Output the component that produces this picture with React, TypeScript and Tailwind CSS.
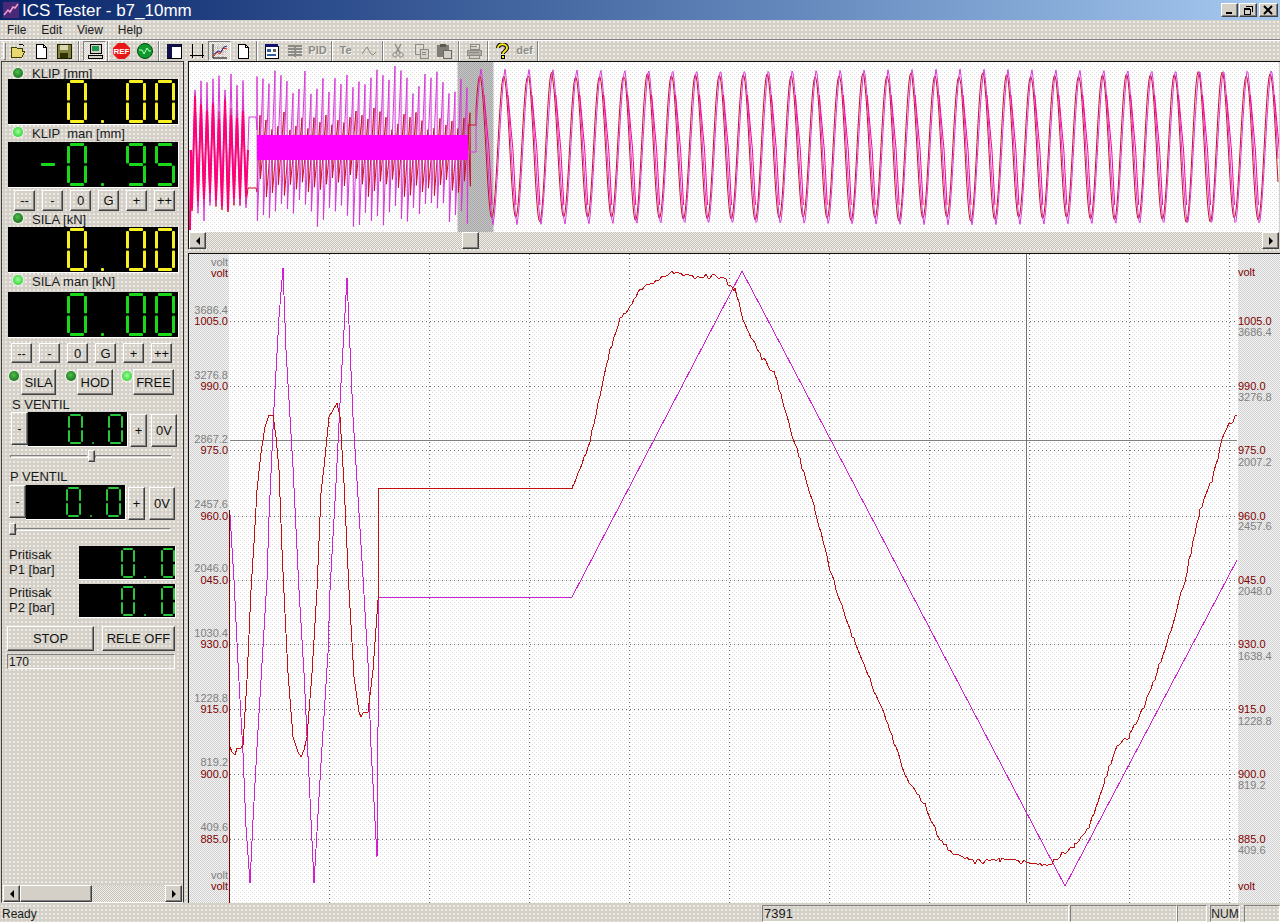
import React from 'react';

// Win9x style bevels, shared by every button
const raised =
  'flex items-center justify-center border border-t-white border-l-white border-r-[#404040] border-b-[#404040] shadow-[inset_-1px_-1px_0_#808080] text-[#101010] leading-none';
const sunken = 'border border-t-[#808080] border-l-[#808080] border-r-white border-b-white';

/* ---------- seven segment readouts ---------- */

const SEGMENTS: Record<string, string> = {
  '0': 'abcdef',
  '5': 'acdfg',
  '9': 'abcdfg',
  '-': 'g',
};

function Digit({ ch, w, h, t, fill }: { ch: string; w: number; h: number; t: number; fill: string }) {
  const on = SEGMENTS[ch] || '';
  const mid = h / 2;
  const rects: Record<string, [number, number, number, number]> = {
    a: [t, 0, w - 2 * t, t],
    b: [w - t, t, t, mid - t - 1],
    c: [w - t, mid + 1, t, mid - t - 1],
    d: [t, h - t, w - 2 * t, t],
    e: [0, mid + 1, t, mid - t - 1],
    f: [0, t, t, mid - t - 1],
    g: [t, mid - t / 2, w - 2 * t, t],
  };
  return (
    <svg width={w} height={h} className="block shrink-0">
      {on.split('').map((s) => {
        const [x, y, rw, rh] = rects[s];
        return <rect key={s} x={x} y={y} width={rw} height={rh} rx={1} className={fill} />;
      })}
    </svg>
  );
}

interface ReadoutProps {
  value: string;
  fill: string;
  w: number;
  h: number;
  t: number;
  gap: string;
  dotW: number;
  className: string;
}

function Readout({ value, fill, w, h, t, gap, dotW, className }: ReadoutProps) {
  return (
    <div aria-label={value} className={`relative flex items-center justify-end bg-black border-r border-b border-white ${gap} ${className}`}>
      {value.split('').map((ch, i) =>
        ch === '.' ? (
          <svg key={i} width={dotW} height={h} className="block shrink-0">
            <rect x={Math.round(dotW / 4)} y={h - t} width={t} height={t} rx={1} className={fill} />
          </svg>
        ) : (
          <Digit key={i} ch={ch} w={w} h={h} t={t} fill={fill} />
        )
      )}
    </div>
  );
}

function BigReadout({ value, color }: { value: string; color: 'yellow' | 'green' }) {
  return (
    <Readout
      value={value}
      fill={color === 'yellow' ? 'fill-[#f8f020]' : 'fill-[#1ad81a]'}
      w={20}
      h={43}
      t={3}
      gap="gap-[9px]"
      dotW={21}
      className="ml-[6px] w-[171px] h-[46px] pr-[3px]"
    />
  );
}

function Led({ on, className = '' }: { on?: boolean; className?: string }) {
  return (
    <span
      className={`block w-[10px] h-[10px] rounded-full shrink-0 shadow-[0_0_2px_1px_#f4f4f0] ${
        on
          ? 'bg-[radial-gradient(circle_at_50%_45%,#9dff9d,#12c812)]'
          : 'bg-[radial-gradient(circle_at_45%_40%,#4fc04f,#0a5a0a)]'
      } ${className}`}
    />
  );
}

function LedLabel({ text, on, h, lead }: { text: string; on?: boolean; h: string; lead: string }) {
  return (
    <div className={`flex ml-[11px] whitespace-pre text-[13px] text-[#1a1a1a] ${h} ${lead}`}>
      <Led on={on} className="mt-[2px]" />
      <span className="ml-[9px]">{text}</span>
    </div>
  );
}

function StepRow({ className }: { className: string }) {
  return (
    <div className={`flex gap-[7px] ${className}`}>
      {['--', '-', '0', 'G', '+', '++'].map((b) => (
        <button key={b} className={`${raised} w-[21px] h-full text-[13px]`}>
          {b}
        </button>
      ))}
    </div>
  );
}

function Arrow({ dir }: { dir: 'left' | 'right' }) {
  return (
    <svg width="6" height="8" viewBox="0 0 6 8" className="block">
      <polygon points={dir === 'left' ? '5,0 5,8 1,4' : '1,0 1,8 5,4'} className="fill-black" />
    </svg>
  );
}

function Slider({ left, right, className }: { left: string; right: string; className: string }) {
  return (
    <div className={`flex items-center h-[12px] ${className}`}>
      <span className={`h-[3px] ${sunken} ${left}`} />
      <span className={`${raised} w-[7px] h-[12px] shrink-0`} />
      <span className={`h-[3px] ${sunken} ${right}`} />
    </div>
  );
}

function ValveRow({ className }: { className: string }) {
  return (
    <div className={`flex items-start ${className}`}>
      <button className={`${raised} w-[17px] h-[33px] text-[13px]`}>-</button>
      <Readout
        value="0.0"
        fill="fill-[#26c83a]"
        w={15}
        h={30}
        t={2}
        gap="gap-[6px]"
        dotW={13}
        className="w-[100px] h-[35px] pr-[4px]"
      />
      <button className={`${raised} w-[17px] h-[33px] ml-[2px] mt-[2px] text-[13px]`}>+</button>
      <button className={`${raised} w-[26px] h-[33px] ml-[4px] mt-[2px] text-[13px]`}>0V</button>
    </div>
  );
}

function Pressure({ name, className }: { name: string; className: string }) {
  return (
    <div className={`flex h-[34px] ${className}`}>
      <div className="w-[70px] ml-[7px] mt-[1px] text-[13px] leading-[15px] text-[#1a1a1a]">
        Pritisak
        <br />
        {name} [bar]
      </div>
      <Readout
        value="0.0"
        fill="fill-[#26c83a]"
        w={14}
        h={30}
        t={2}
        gap="gap-[5px]"
        dotW={16}
        className="w-[97px] h-[34px]"
      />
    </div>
  );
}

function LeftPanel() {
  return (
    <div className="w-[183px] h-[842px] ml-[1px] shrink-0 flex flex-col border border-[#404040] border-r-[#303030] border-b-white">
      <div className="mt-[4px]">
        <LedLabel text="KLIP [mm]" h="h-[13px]" lead="leading-[16px]" />
      </div>
      <BigReadout value="0.00" color="yellow" />
      <LedLabel text="KLIP  man [mm]" on h="h-[17px]" lead="leading-[17px]" />
      <BigReadout value="-0.95" color="green" />
      <StepRow className="ml-[12px] mt-[2px] h-[21px]" />
      <LedLabel text="SILA [kN]" h="h-[16px]" lead="leading-[18px]" />
      <BigReadout value="0.00" color="yellow" />
      <LedLabel text="SILA man [kN]" on h="h-[19px]" lead="leading-[18px]" />
      <BigReadout value="0.00" color="green" />
      <StepRow className="ml-[9px] mt-[5px] h-[20px]" />

      <div className="flex ml-[7px] mt-[6px] h-[26px] text-[13px]">
        <Led className="mt-[2px]" />
        <button className={`${raised} ml-[2px] w-[35px]`}>SILA</button>
        <Led className="ml-[10px] mt-[2px]" />
        <button className={`${raised} ml-[1px] w-[36px]`}>HOD</button>
        <Led className="ml-[9px] mt-[2px]" on />
        <button className={`${raised} ml-[1px] w-[41px]`}>FREE</button>
      </div>

      <div className="ml-[10px] h-[17px] text-[13px] leading-[20px] text-[#1a1a1a]">S VENTIL</div>
      <ValveRow className="ml-[9px] h-[35px]" />
      <Slider className="ml-[8px] mt-[3px]" left="w-[78px]" right="w-[77px]" />

      <div className="ml-[8px] h-[23px] text-[13px] leading-[30px] text-[#1a1a1a]">P VENTIL</div>
      <ValveRow className="ml-[7px] h-[34px]" />
      <Slider className="ml-[7px] mt-[4px]" left="w-0 border-0" right="w-[155px]" />

      <Pressure name="P1" className="mt-[11px]" />
      <Pressure name="P2" className="mt-[4px]" />

      <div className="flex gap-[8px] ml-[5px] mt-[8px] h-[25px] text-[13px]">
        <button className={`${raised} w-[87px]`}>STOP</button>
        <button className={`${raised} w-[73px]`}>RELE OFF</button>
      </div>
      <div className={`ml-[5px] mt-[3px] w-[168px] h-[15px] text-[12px] leading-[14px] pl-[1px] text-[#1a1a1a] ${sunken}`}>170</div>

      <div className="flex-1" />
      <Scrollbar className="h-[17px] ml-[1px] w-[179px]" thumb="w-[72px]" before="" />
    </div>
  );
}

function Scrollbar({ className, thumb, before }: { className: string; thumb: string; before: string }) {
  return (
    <div className={`flex bg-[repeating-conic-gradient(#f2f0ea_0_25%,#c4c0b8_0_50%)] bg-[length:2px_2px] ${className}`}>
      <button className={`${raised} w-[17px] h-full bg-[#d4d0c8] shrink-0`}>
        <Arrow dir="left" />
      </button>
      <span className={before} />
      <span className={`${raised} h-full bg-[#d4d0c8] shrink-0 ${thumb}`} />
      <span className="flex-1" />
      <button className={`${raised} w-[17px] h-full bg-[#d4d0c8] shrink-0`}>
        <Arrow dir="right" />
      </button>
    </div>
  );
}

/* ---------- chart data ---------- */

const noise = (i: number) => {
  const v = Math.sin(i * 12.9898) * 43758.5453;
  return v - Math.floor(v);
};

const toPts = (p: number[][]) => p.map(([x, y]) => `${x},${y}`).join(' ');

const RED_HEAD = [
  [230, 747], [232, 752], [235, 755], [237, 748], [241, 748], [243, 745], [247, 680], [251, 590], [254, 543], [257, 490],
  [261, 453], [265, 427], [269, 415], [273, 415], [276, 437], [279, 470], [282, 550], [284, 593], [288, 673],
  [293, 737], [298, 752], [301, 757], [304, 750], [307, 737], [312, 673], [317, 590], [321, 493], [324, 467],
  [329, 417], [333, 410], [337, 403], [340, 417], [344, 483], [349, 590], [354, 677], [359, 712], [361, 717],
  [363, 713], [368, 712], [373, 670], [378, 600], [378, 488], [572, 488],
];

const RED_TAIL = [
  [572, 488], [580, 470], [590, 440], [600, 395], [610, 350], [620, 320], [630, 305], [640, 290], [650, 283],
  [660, 278], [675, 272], [690, 276], [720, 276], [735, 290], [745, 325], [760, 355], [775, 375], [785, 410],
  [800, 460], [815, 510], [830, 570], [850, 630], [870, 680], [890, 730], [905, 775], [925, 805], [940, 840],
  [955, 855], [975, 862], [1000, 860], [1030, 862], [1050, 865], [1060, 855], [1075, 845], [1090, 825],
  [1105, 780], [1115, 750], [1130, 735], [1145, 705], [1165, 650], [1185, 580], [1200, 510], [1212, 480],
  [1225, 430], [1237, 415],
];

// the real signal is noisy, so resample the tail every 2px with some jitter
function roughen(src: number[][]) {
  const out: number[][] = [];
  for (let s = 0; s < src.length - 1; s++) {
    const [x0, y0] = src[s];
    const [x1, y1] = src[s + 1];
    for (let x = x0; x < x1; x += 2) {
      const y = y0 + ((y1 - y0) * (x - x0)) / (x1 - x0);
      out.push([x, Math.round(y + (noise(x) - 0.5) * 5)]);
    }
  }
  out.push(src[src.length - 1]);
  return out;
}

const redMain = toPts([...RED_HEAD, ...roughen(RED_TAIL)]);

const magentaMain = toPts([
  [230, 515], [234, 580], [238, 663], [243, 753], [246, 827], [250, 883], [253, 820], [257, 747], [263, 647],
  [267, 580], [269, 517], [274, 407], [279, 317], [283, 268], [286, 350], [293, 467], [299, 590], [304, 673],
  [309, 777], [314, 883], [321, 763], [328, 653], [330, 590], [336, 483], [341, 383], [347, 278], [353, 417],
  [363, 577], [368, 663], [371, 747], [377, 857], [378, 727], [378, 597], [572, 597], [742, 271], [1065, 886],
  [1237, 560],
]);

// overview strip: burst, dense middle, then the slow sine
function stripTraces() {
  const red: number[][] = [[190, 230], [191, 150]];
  const mag: number[][] = [[190, 150]];
  const pink: number[][] = [[190, 230], [191, 150]];
  let i = 0;
  for (let x = 192; x < 248; x += 3) {
    i++;
    const up = i % 2 === 0;
    pink.push([x, up ? 95 + noise(i) * 25 : 190 + noise(i) * 20]);
    mag.push([x, up ? 72 + noise(i + 50) * 22 : 200 + noise(i + 50) * 24]);
    red.push([x, up ? 92 + noise(i) * 20 : 200 + noise(i) * 12]);
  }
  red.push([248, 188], [256, 188], [257, 192]);
  mag.push([249, 117], [256, 117], [257, 130]);
  pink.push([248, 150]);
  i = 0;
  for (let x = 257; x < 468; x += 6) {
    i++;
    red.push([x + 3, 108 + noise(i + 7) * 22], [x + 3.4, 175 + noise(i + 11) * 22]);
    mag.push([x, 66 + noise(i + 3) * 28], [x + 0.4, 200 + noise(i + 19) * 27]);
  }
  red.push([468, 125], [476, 125]);
  mag.push([468, 152], [476, 152]);
  for (let x = 476; x <= 1278; x += 1) {
    const ph = ((x - 481) * Math.PI * 2) / 23.95;
    const wave = Math.cos(ph);
    const tri = (Math.acos(Math.cos(ph)) / Math.PI) * 2 - 1;
    const blend = wave * 0.6 - tri * 0.4;
    mag.push([x, 147 - blend * 78]);
    const rp = ((x - 479.8) * Math.PI * 2) / 23.95;
    red.push([x, 147 - Math.cos(rp) * (70 + noise(Math.floor((x - 481) / 24) + 60) * 6)]);
  }
  return { red: toPts(red), mag: toPts(mag), pink: toPts(pink) };
}

const strip = stripTraces();

// slow part where both traces lie on each other goes hot pink
const slowPink = (() => {
  const out: string[] = [];
  for (let x0 = 481; x0 < 1278; x0 += 23.95) {
    out.push(`${x0 + 3},95 ${x0 + 8},150 ${x0 + 11},205`);
  }
  return out;
})();

const LEFT_LABELS: [string, string, number, number][] = [
  ['volt', 'volt', 262, 273],
  ['3686.4', '1005.0', 310, 321],
  ['3276.8', '990.0', 375, 386],
  ['2867.2', '975.0', 439, 450],
  ['2457.6', '960.0', 504, 516],
  ['2046.0', '045.0', 568, 580],
  ['1030.4', '930.0', 633, 644],
  ['1228.8', '915.0', 698, 709],
  ['819.2', '900.0', 762, 774],
  ['409.6', '885.0', 827, 839],
  ['volt', 'volt', 875, 886],
];

const RIGHT_LABELS: [string, string, number, number][] = [
  ['1005.0', '3686.4', 321, 332],
  ['990.0', '3276.8', 386, 397],
  ['975.0', '2007.2', 450, 462],
  ['960.0', '2457.6', 516, 526],
  ['045.0', '2048.0', 580, 591],
  ['930.0', '1638.4', 644, 656],
  ['915.0', '1228.8', 709, 721],
  ['900.0', '819.2', 774, 785],
  ['885.0', '409.6', 839, 850],
];

const GRID_Y = [321, 386, 450, 516, 580, 644, 709, 774, 839];
const GRID_X = [329, 429, 529, 629, 729, 829, 929, 1029, 1129, 1229];

function Patterns() {
  return (
    <defs>
      <pattern id="plotDots" width="4" height="4" patternUnits="userSpaceOnUse">
        <rect width="4" height="4" fill="#ffffff" />
        <rect width="1" height="1" fill="#dcdcdc" />
        <rect x="2" y="2" width="1" height="1" fill="#dcdcdc" />
      </pattern>
      <pattern id="marginDots" width="2" height="2" patternUnits="userSpaceOnUse">
        <rect width="2" height="2" fill="#f4f4f4" />
        <rect width="1" height="1" fill="#d0d0d0" />
        <rect x="1" y="1" width="1" height="1" fill="#d0d0d0" />
      </pattern>
      <pattern id="selDots" width="2" height="2" patternUnits="userSpaceOnUse">
        <rect width="2" height="2" fill="#c4c4c4" />
        <rect width="1" height="1" fill="#a8a8a8" />
        <rect x="1" y="1" width="1" height="1" fill="#a8a8a8" />
      </pattern>
    </defs>
  );
}

function StripChart() {
  return (
    <svg width={1090} height={170} viewBox="189 62 1090 170" className="block">
      <Patterns />
      <rect x="189" y="62" width="1090" height="170" fill="url(#plotDots)" />
      <rect x="457.5" y="62" width="36" height="170" fill="url(#selDots)" />
      <polyline points={strip.red} fill="none" className="stroke-[#c81020]" strokeWidth={1} />
      <polyline points={strip.mag} fill="none" className="stroke-[#d838d8]" strokeWidth={1} />
      <rect x="257" y="135" width="211" height="25" className="fill-[#ff00ff]" />
      <polyline points={strip.pink} fill="none" className="stroke-[#ff0078]" strokeWidth={2} />
      {slowPink.map((p, i) => (
        <polyline key={i} points={p} fill="none" className="stroke-[#ff0090]" strokeWidth={1} />
      ))}
    </svg>
  );
}

function MainChart() {
  return (
    <svg width={1091} height={649} viewBox="189 254 1091 649" className="block">
      <Patterns />
      <rect x="189" y="254" width="1091" height="649" fill="url(#plotDots)" />
      <rect x="189" y="254" width="40" height="649" fill="url(#marginDots)" />
      <rect x="1238" y="254" width="42" height="649" fill="url(#marginDots)" />
      {GRID_Y.map((y) => (
        <line key={y} x1="230" x2="1237" y1={y + 0.5} y2={y + 0.5} className="stroke-[#707070]" strokeDasharray="1 3" />
      ))}
      {GRID_X.map((x) => (
        <line key={x} x1={x + 0.5} x2={x + 0.5} y1="254" y2="903" className="stroke-[#707070]" strokeDasharray="1 3" />
      ))}
      <line x1="230" x2="1237" y1="440.5" y2="440.5" className="stroke-[#808080]" />
      <line x1="1026.5" x2="1026.5" y1="254" y2="903" className="stroke-[#707070]" />
      <line x1="229.5" x2="229.5" y1="510" y2="903" className="stroke-[#800000]" />
      <polyline points={magentaMain} fill="none" className="stroke-[#d020d0]" strokeWidth={1} shapeRendering="crispEdges" />
      <polyline points={redMain} fill="none" className="stroke-[#c01010]" strokeWidth={1} shapeRendering="crispEdges" />
      {LEFT_LABELS.map(([g, r, gy, ry]) => (
        <g key={ry} textAnchor="end" className="text-[11px]">
          <text x="228" y={gy + 4} className="fill-[#808080]">{g}</text>
          <text x="228" y={ry + 4} className="fill-[#800000]">{r}</text>
        </g>
      ))}
      {RIGHT_LABELS.map(([r, g, ry, gy]) => (
        <g key={ry} className="text-[11px]">
          <text x="1238" y={ry + 4} className="fill-[#800000]">{r}</text>
          <text x="1238" y={gy + 4} className="fill-[#808080]">{g}</text>
        </g>
      ))}
      <text x="1238" y="276" className="text-[11px] fill-[#800000]">volt</text>
      <text x="1238" y="890" className="text-[11px] fill-[#800000]">volt</text>
    </svg>
  );
}

/* ---------- toolbar ---------- */

function Ico({ children }: { children: React.ReactNode }) {
  return (
    <svg width="16" height="16" viewBox="0 0 16 16" className="block" shapeRendering="crispEdges">
      {children}
    </svg>
  );
}

const GREY = '#8c8c86';

const icons = {
  open: (
    <Ico>
      <path d="M1 4h5l1 1h5v3h3l-3 6H1z" fill="#e8d870" stroke="#404000" />
      <path d="M9 1h3l2 2" fill="none" stroke="#000" />
    </Ico>
  ),
  doc: (
    <Ico>
      <path d="M3 1h7l3 3v11H3z" fill="#fff" stroke="#000" />
      <path d="M10 1v3h3" fill="none" stroke="#000" />
    </Ico>
  ),
  save: (
    <Ico>
      <rect x="1" y="1" width="14" height="14" fill="#808040" stroke="#202000" />
      <rect x="4" y="2" width="8" height="5" fill="#d8d8b0" />
      <rect x="4" y="10" width="8" height="5" fill="#303000" />
    </Ico>
  ),
  computer: (
    <Ico>
      <rect x="3" y="1" width="11" height="9" fill="#d4d0c8" stroke="#000" />
      <rect x="5" y="3" width="7" height="5" fill="#209850" />
      <rect x="1" y="12" width="14" height="3" fill="#d4d0c8" stroke="#000" />
    </Ico>
  ),
  ref: (
    <svg width="17" height="16" viewBox="0 0 17 16" className="block">
      <polygon points="5,0 12,0 17,5 17,11 12,16 5,16 0,11 0,5" fill="#e81818" />
      <text x="8.5" y="11" textAnchor="middle" className="text-[8px] font-bold fill-white">REF</text>
    </svg>
  ),
  run: (
    <svg width="16" height="16" viewBox="0 0 16 16" className="block">
      <circle cx="8" cy="8" r="7.5" fill="#0e9a2c" stroke="#064a14" />
      <path d="M2 7h3l2 4 3-6 2 3h2" fill="none" stroke="#c8ffc8" />
    </svg>
  ),
  panes: (
    <Ico>
      <rect x="1" y="1" width="14" height="14" fill="#fff" stroke="#000" />
      <rect x="1" y="1" width="14" height="3" fill="#101048" />
      <rect x="1" y="4" width="5" height="11" fill="#101048" />
    </Ico>
  ),
  frame: (
    <Ico>
      <path d="M3 1v14M13 1v14M1 12h14" fill="none" stroke="#000" />
    </Ico>
  ),
  chart: (
    <svg width="16" height="16" viewBox="0 0 16 16" className="block">
      <path d="M1 1v14h14" fill="none" stroke="#000" />
      <path d="M1 5h14M1 9h14M6 1v13M11 1v13" fill="none" stroke="#a8a8a8" strokeDasharray="1 1" />
      <path d="M2 13l3-4 3 2 3-6 4 1" fill="none" stroke="#d01818" />
      <path d="M2 11l4-3 3 1 3-5 3-1" fill="none" stroke="#303090" />
    </svg>
  ),
  form: (
    <Ico>
      <rect x="1" y="3" width="13" height="12" fill="#fff" stroke="#000" />
      <rect x="1" y="1" width="13" height="3" fill="#101070" />
      <rect x="3" y="6" width="4" height="3" fill="#3060a0" />
      <rect x="9" y="6" width="3" height="3" fill="#606060" />
      <rect x="3" y="11" width="9" height="2" fill="#3060a0" />
    </Ico>
  ),
  table: (
    <Ico>
      <path d="M1 3h14M1 6h14M1 9h14M1 12h14M8 2v12" fill="none" stroke={GREY} strokeWidth="2" />
    </Ico>
  ),
  wave: (
    <svg width="16" height="16" viewBox="0 0 16 16" className="block">
      <path d="M1 11l5-7 4 7 2 1 3-3" fill="none" stroke={GREY} />
    </svg>
  ),
  cut: (
    <svg width="16" height="16" viewBox="0 0 16 16" className="block">
      <path d="M5 1l5 9M11 1l-5 9" fill="none" stroke={GREY} strokeWidth="1.5" />
      <circle cx="5" cy="12" r="2.2" fill="none" stroke={GREY} />
      <circle cx="11" cy="12" r="2.2" fill="none" stroke={GREY} />
    </svg>
  ),
  copy: (
    <Ico>
      <rect x="2" y="1" width="8" height="10" fill="none" stroke={GREY} />
      <rect x="7" y="6" width="8" height="9" fill="#d4d0c8" stroke={GREY} />
      <path d="M9 9h4M9 11h4" fill="none" stroke={GREY} />
    </Ico>
  ),
  paste: (
    <Ico>
      <rect x="1" y="2" width="12" height="12" fill="#807c76" />
      <rect x="4" y="1" width="6" height="3" fill="#5a5852" />
      <rect x="7" y="7" width="8" height="8" fill="#d4d0c8" stroke="#6a6862" />
    </Ico>
  ),
  print: (
    <Ico>
      <path d="M4 1h9v5H4z" fill="none" stroke={GREY} />
      <path d="M1 7h14v5H1z" fill="#b0aca4" stroke={GREY} />
      <path d="M3 12h10v3H3z" fill="#d4d0c8" stroke={GREY} />
      <path d="M5 3h6M3 9h10" fill="none" stroke={GREY} />
    </Ico>
  ),
  help: (
    <svg width="16" height="16" viewBox="0 0 16 16" className="block">
      <path d="M4 5c0-5 9-5 9 0 0 3-4 3-4 6" fill="none" stroke="#000" strokeWidth="4" />
      <path d="M4 5c0-5 9-5 9 0 0 3-4 3-4 6" fill="none" stroke="#f8e820" strokeWidth="2" />
      <rect x="7" y="12" width="4" height="4" fill="#000" />
      <rect x="8" y="13" width="2" height="2" fill="#f8e820" />
    </svg>
  ),
};

function Tool({ children, down }: { children: React.ReactNode; down?: boolean }) {
  return (
    <span
      className={`flex items-center justify-center w-[23px] h-[20px] shrink-0 ${
        down
          ? 'border border-t-[#808080] border-l-[#808080] border-r-white border-b-white bg-[repeating-conic-gradient(#f4f2ec_0_25%,#d4d0c8_0_50%)] bg-[length:2px_2px]'
          : ''
      }`}
    >
      {children}
    </span>
  );
}

function Sep({ w }: { w: string }) {
  return (
    <span className={`flex justify-center shrink-0 ${w}`}>
      <span className="block h-[20px] w-[2px] border-l border-l-[#808080] border-r border-r-white" />
    </span>
  );
}

function ToolLabel({ text }: { text: string }) {
  return <span className="text-[11px] font-bold text-[#8c8c86] [text-shadow:1px_1px_0_#f4f4f0] leading-none">{text}</span>;
}

function Toolbar() {
  return (
    <div className="flex items-center h-[22px] border-t border-t-[#808080] shadow-[inset_0_1px_0_#ffffff] pl-[3px] shrink-0">
      <span className={`block w-[3px] h-[18px] border border-t-white border-l-white border-r-[#808080] border-b-[#808080]`} />
      <Tool>{icons.open}</Tool>
      <Tool>{icons.doc}</Tool>
      <Tool>{icons.save}</Tool>
      <Sep w="w-[8px]" />
      <Tool down>{icons.computer}</Tool>
      <Sep w="w-[4px]" />
      <Tool>{icons.ref}</Tool>
      <Tool>{icons.run}</Tool>
      <Sep w="w-[6px]" />
      <Tool>{icons.panes}</Tool>
      <Tool>{icons.frame}</Tool>
      <Tool down>{icons.chart}</Tool>
      <Tool>{icons.doc}</Tool>
      <Sep w="w-[6px]" />
      <Tool>{icons.form}</Tool>
      <Tool>{icons.table}</Tool>
      <Tool><ToolLabel text="PID" /></Tool>
      <Sep w="w-[5px]" />
      <Tool><ToolLabel text="Te" /></Tool>
      <Tool>{icons.wave}</Tool>
      <Sep w="w-[6px]" />
      <Tool>{icons.cut}</Tool>
      <Tool>{icons.copy}</Tool>
      <Tool>{icons.paste}</Tool>
      <Sep w="w-[7px]" />
      <Tool>{icons.print}</Tool>
      <Sep w="w-[5px]" />
      <Tool>{icons.help}</Tool>
      <Tool><ToolLabel text="def" /></Tool>
      <Sep w="w-[4px]" />
    </div>
  );
}

function TitleBar() {
  return (
    <div className="flex items-center h-[20px] pl-[3px] pr-[2px] bg-gradient-to-r from-[#0a246a] to-[#a6caf0] shrink-0">
      <svg width="16" height="16" viewBox="0 0 16 16" className="block shrink-0">
        <rect width="16" height="16" fill="#4a2a78" />
        <path d="M1 13l4-5 2 2 3-5 2 1 3-4" fill="none" stroke="#f4a0d0" strokeWidth="1.5" />
      </svg>
      <span className="ml-[3px] text-[17px] leading-none text-white">ICS Tester - b7_10mm</span>
      <span className="flex-1" />
      <button className={`${raised} w-[17px] h-[14px] bg-[#d4d0c8]`}>
        <svg width="11" height="10" viewBox="0 0 11 10" className="block"><rect x="2" y="7" width="6" height="2" fill="#000" /></svg>
      </button>
      <button className={`${raised} w-[18px] h-[14px] ml-[1px] bg-[#d4d0c8]`}>
        <svg width="11" height="10" viewBox="0 0 11 10" className="block" shapeRendering="crispEdges">
          <path d="M3 1.5h6.5v5M1 4h6v5H1z" fill="none" stroke="#000" />
          <path d="M3 1h7M1 3.5h6" stroke="#000" />
        </svg>
      </button>
      <button className={`${raised} w-[19px] h-[14px] ml-[2px] bg-[#d4d0c8]`}>
        <svg width="11" height="10" viewBox="0 0 11 10" className="block">
          <path d="M1 1l8 8M9 1l-8 8" stroke="#000" strokeWidth="2" />
        </svg>
      </button>
    </div>
  );
}

function StatusCell({ children, className }: { children?: React.ReactNode; className: string }) {
  return <div className={`h-[17px] shrink-0 ${sunken} ${className}`}>{children}</div>;
}

export default function App() {
  return (
    <div className="w-[1280px] h-[922px] overflow-hidden flex flex-col bg-[#d4d0c8] bg-[radial-gradient(circle,#eceae4_1px,transparent_1px)] bg-[length:4px_4px] font-['Liberation_Sans',Arial,sans-serif] text-[#1a1a1a]">
      <TitleBar />
      <div className="flex gap-[15px] pl-[7px] h-[19px] items-center text-[12px] shrink-0">
        <span>File</span>
        <span>Edit</span>
        <span>View</span>
        <span>Help</span>
      </div>
      <Toolbar />

      <div className="flex h-[844px] shrink-0">
        <LeftPanel />
        <div className="flex flex-col ml-[4px] w-[1092px]">
          <div className="border-t border-l border-[#101010]">
            <StripChart />
            <Scrollbar className="h-[17px] w-[1090px]" thumb="w-[17px]" before="w-[256px]" />
          </div>
          <div className="mt-[4px] border-t border-l border-[#101010]">
            <MainChart />
          </div>
        </div>
      </div>

      <div className="flex items-start h-[17px] text-[12px] leading-[18px] shrink-0">
        <div className="w-[763px] pl-[2px]">Ready</div>
        <StatusCell className="w-[307px] text-[13px] leading-[16px] pl-[1px]">7391</StatusCell>
        <StatusCell className="w-[107px] ml-[1px]" />
        <StatusCell className="w-[30px]" />
        <StatusCell className="w-[30px] ml-[3px] text-center leading-[16px]">NUM</StatusCell>
        <StatusCell className="w-[36px] ml-[4px]" />
      </div>
    </div>
  );
}
